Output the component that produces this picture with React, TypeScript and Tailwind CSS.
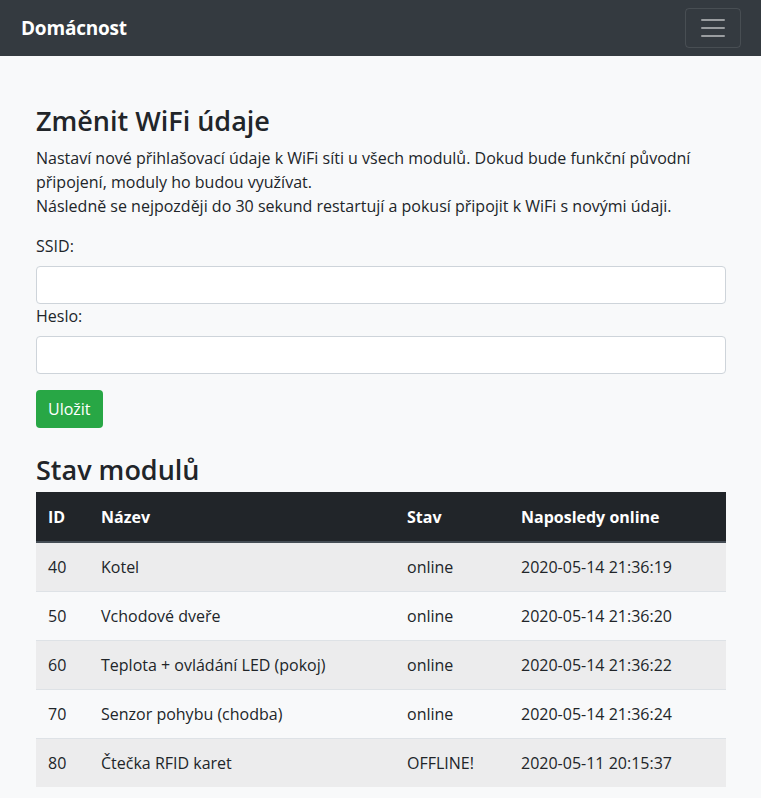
import React from 'react';

const modules = [
  { id: 40, name: 'Kotel', status: 'online', last: '2020-05-14 21:36:19' },
  { id: 50, name: 'Vchodové dveře', status: 'online', last: '2020-05-14 21:36:20' },
  { id: 60, name: 'Teplota + ovládání LED (pokoj)', status: 'online', last: '2020-05-14 21:36:22' },
  { id: 70, name: 'Senzor pohybu (chodba)', status: 'online', last: '2020-05-14 21:36:24' },
  { id: 80, name: 'Čtečka RFID karet', status: 'OFFLINE!', last: '2020-05-11 20:15:37' },
];

function Navbar() {
  return (
    <nav className="flex h-14 items-center justify-between bg-[#343a40] pl-[21px] pr-[20px]">
      <span className="text-[19px] font-bold tracking-[-0.2px] text-white">Domácnost</span>
      <button
        type="button"
        className="flex h-10 w-14 items-center justify-center rounded border border-white/10"
      >
        <svg width="30" height="30" viewBox="0 0 30 30">
          <path
            d="M4 7h22M4 15h22M4 23h22"
            stroke="rgba(255,255,255,0.5)"
            strokeWidth="2"
            strokeLinecap="round"
          />
        </svg>
      </button>
    </nav>
  );
}

export default function App() {
  return (
    <div
      className="min-h-[798px] bg-[#f8f9fa] text-[16px] leading-6 text-[#212529]"
      style={{ fontFamily: '"Open Sans", "Noto Sans", sans-serif' }}
    >
      <Navbar />

      <main className="pl-[36px] pr-[35px] pt-12 pb-6">
        <h3 className="mb-2 text-[27px] leading-[33.6px] font-semibold">Změnit WiFi údaje</h3>
        <p className="mb-4">
          Nastaví nové přihlašovací údaje k WiFi síti u všech modulů. Dokud bude funkční původní
          připojení, moduly ho budou využívat.
          <br />
          Následně se nejpozději do 30 sekund restartují a pokusí připojit k WiFi s novými údaji.
        </p>

        <form onSubmit={(e) => e.preventDefault()}>
          <label className="mb-2 block">SSID:</label>
          <input
            type="text"
            className="block h-[38px] w-full rounded border border-[#ced4da] bg-white px-3"
          />
          <label className="mb-2 block">Heslo:</label>
          <input
            type="password"
            className="block h-[38px] w-full rounded border border-[#ced4da] bg-white px-3"
          />
          <button
            type="submit"
            className="mt-4 h-[38px] rounded bg-[#28a745] px-3 text-white"
          >
            Uložit
          </button>
        </form>

        <h3 className="mt-[25px] mb-[6px] text-[27px] leading-[33.6px] font-semibold">Stav modulů</h3>

        <table className="w-full table-fixed border-collapse">
          <colgroup>
            <col className="w-[53px]" />
            <col className="w-[306px]" />
            <col className="w-[114px]" />
            <col />
          </colgroup>
          <thead>
            <tr className="bg-[#212529] text-left text-white">
              <th className="border-b-2 border-[#454d55] px-3 pt-[13px] pb-3 font-bold">ID</th>
              <th className="border-b-2 border-[#454d55] px-3 pt-[13px] pb-3 font-bold">Název</th>
              <th className="border-b-2 border-[#454d55] px-3 pt-[13px] pb-3 font-bold">Stav</th>
              <th className="border-b-2 border-[#454d55] px-3 pt-[13px] pb-3 font-bold">
                Naposledy online
              </th>
            </tr>
          </thead>
          <tbody>
            {modules.map((m, i) => (
              <tr key={m.id} className={i % 2 === 0 ? 'bg-[#ececed]' : ''}>
                <td className="border-t border-[#dee2e6] p-3">{m.id}</td>
                <td className="border-t border-[#dee2e6] p-3">{m.name}</td>
                <td className="border-t border-[#dee2e6] p-3">{m.status}</td>
                <td className="border-t border-[#dee2e6] p-3">{m.last}</td>
              </tr>
            ))}
          </tbody>
        </table>
      </main>
    </div>
  );
}
